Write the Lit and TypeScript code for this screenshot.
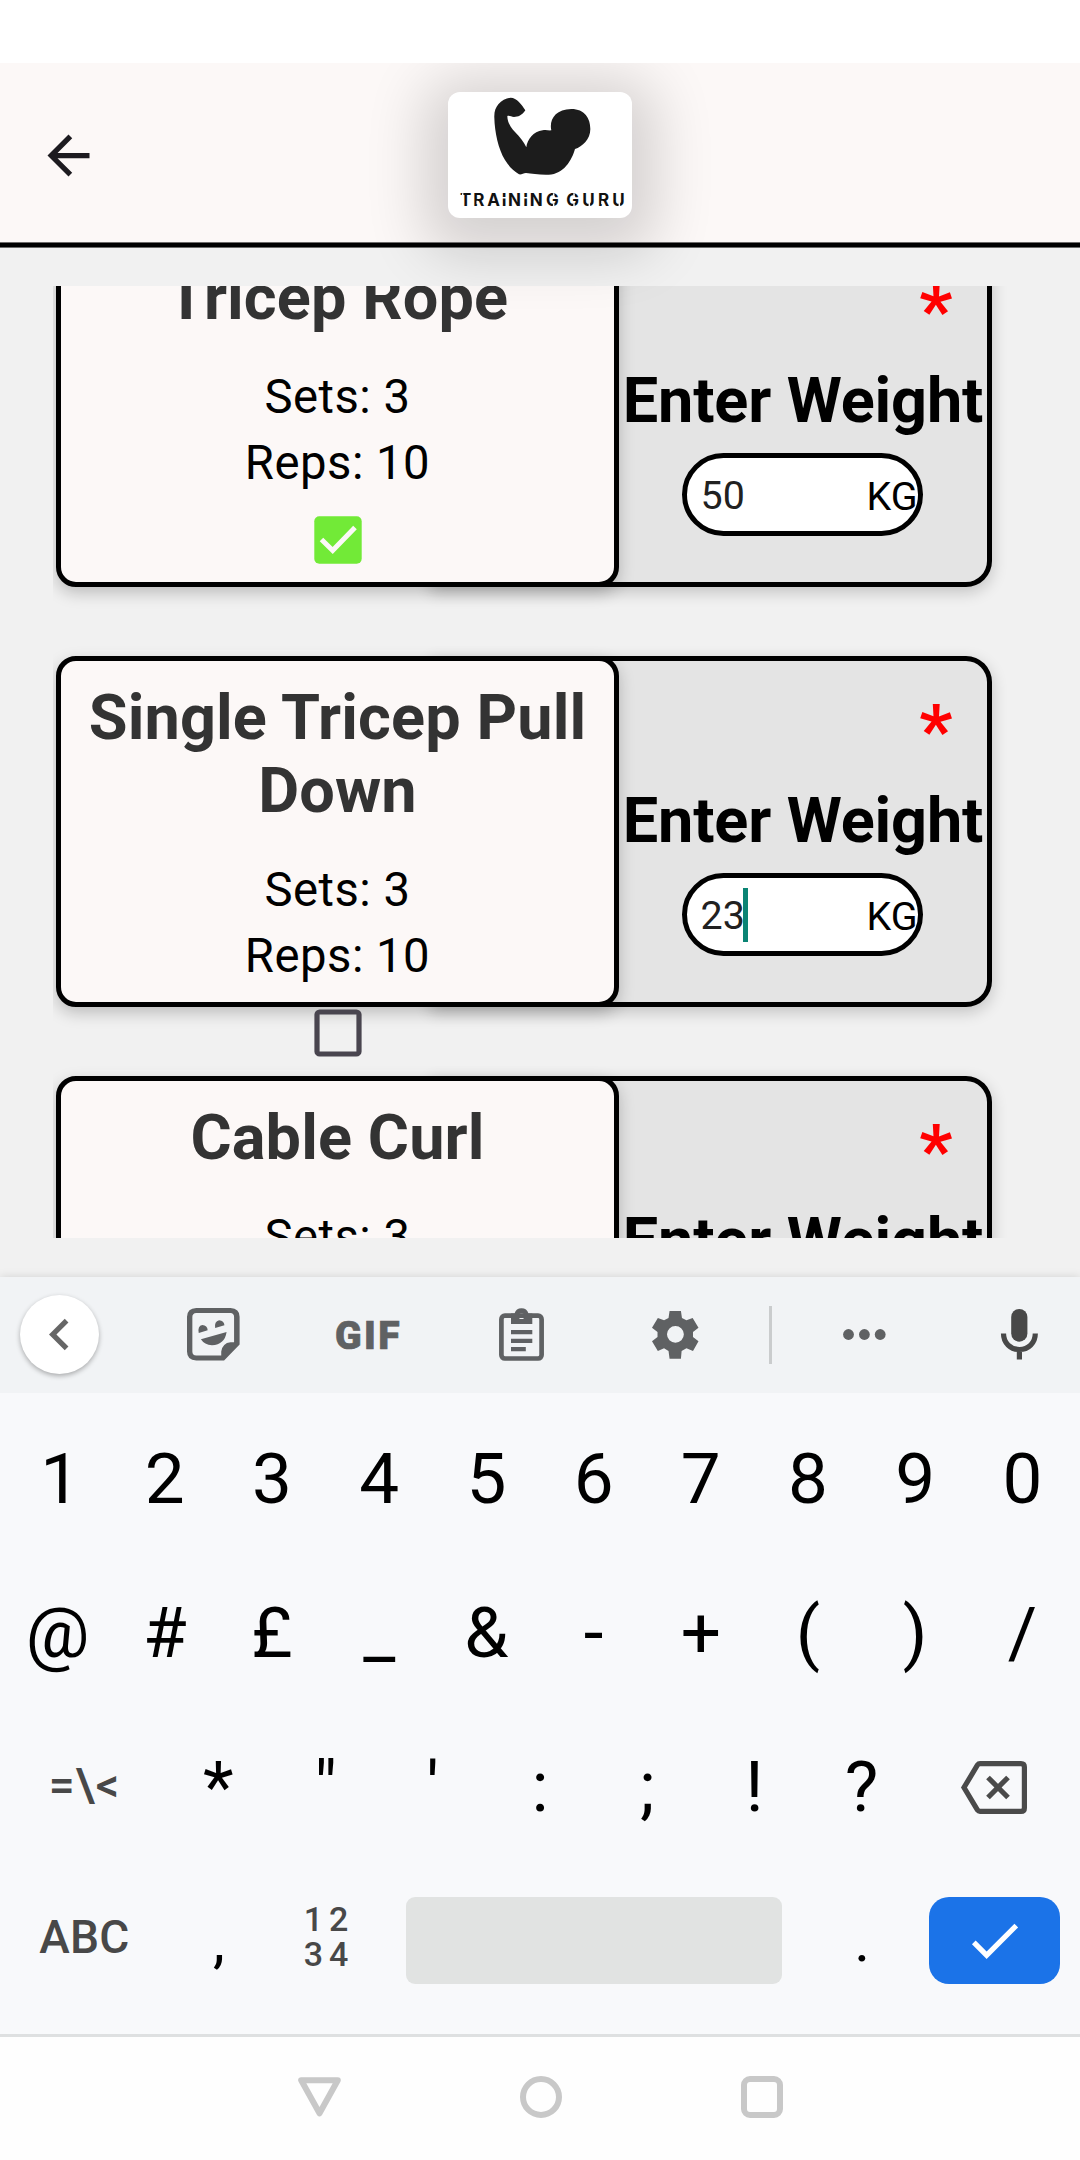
import { LitElement, html, css, svg, nothing } from "lit";
import { customElement, property } from "lit/decorators.js";

interface Exercise {
  name: string;
  sets: number;
  reps: number;
  done: boolean;
  weight: string;
  focused: boolean;
}

const EXERCISES: Exercise[] = [
  { name: "Tricep Rope", sets: 3, reps: 10, done: true, weight: "50", focused: false },
  { name: "Single Tricep Pull Down", sets: 3, reps: 10, done: false, weight: "23", focused: true },
  { name: "Cable Curl", sets: 3, reps: 10, done: false, weight: "", focused: false },
];

@customElement("app-header")
class AppHeader extends LitElement {
  static styles = css`
    :host {
      display: grid;
      grid-template-columns: 1fr 184px 1fr;
      align-items: center;
      box-sizing: border-box;
      height: 179px;
      background: #fcf8f7;
      position: relative;
      z-index: 2;
      clip-path: inset(0 0 -140px 0);
    }
    .back {
      display: block;
      width: 63px;
      height: 63px;
      margin: 6px 0 0 37px;
    }
    .logo {
      width: 184px;
      height: 126px;
      margin-top: 4px;
      border-radius: 12px;
      background: #fff;
      box-shadow: 0 12px 58px 24px rgba(0, 0, 0, 0.16);
    }
    .logo svg {
      display: block;
      width: 184px;
      height: 126px;
    }
    .brand {
      font: 700 51px "Inter", "Roboto", sans-serif;
      fill: #111;
    }
  `;
  render() {
    return html`
      <svg class="back" viewBox="0 0 24 24">
        <path fill="#1d1b20" d="M20 11H7.83l5.59-5.59L12 4l-8 8 8 8 1.41-1.41L7.83 13H20v-2z" />
      </svg>
      <div class="logo">
        <svg viewBox="264 126 552 378">
          <path
            fill="#1c1c1c"
            d="M496 181 C486 196 474 201 462 201 C454 201 449 196 442 198 C442 216 452 233 465 246 C480 261 491 275 499 292 C502 268 520 245 548 241 C558 239 566 242 574 241 C567 211 585 177 634 177 C674 177 691 205 691 237 C691 268 667 290 645 297 C636 330 611 373 566 374 C540 375 515 371 498 369 C490 369 484 375 477 373 C461 363 446 349 435 330 C415 297 404 246 403 203 C402 185 407 173 415 163 C425 151 439 144 452 143 C470 143 486 164 496 181 Z"
          />
          <text class="brand" x="300 340 382 425 444 490 509 558 600 619 667 714 757" y="469">TRAINING GURU</text>
          <path stroke="#fff" stroke-width="4.500" d="M425 443H441M490 443H506M308 430V440M352 452V462M581 430V441M581 460V471M642 430V441M642 460V471M688 458V471M778 458V471M726 452V462" />
        </svg>
      </div>
    `;
  }
}

@customElement("exercise-card")
class ExerciseCard extends LitElement {
  @property({ attribute: false }) item!: Exercise;
  static styles = css`
    :host {
      display: flex;
      height: 351px;
    }
    .panel {
      box-sizing: border-box;
      height: 351px;
      border: 5px solid #000;
      display: flex;
      flex-direction: column;
      flex: none;
    }
    .info {
      width: 563px;
      border-radius: 20px;
      background: #fcf8f7;
      align-items: center;
      padding-top: 20px;
      position: relative;
      z-index: 1;
      box-shadow: 0 6px 16px rgba(0, 0, 0, 0.22);
    }
    .weight {
      width: 562px;
      margin-left: -189px;
      padding-left: 184px;
      border-radius: 4px 26px 26px 4px;
      background: #e4e4e4;
      align-items: center;
      box-shadow: 0 5px 16px rgba(0, 0, 0, 0.2);
    }
    .name {
      width: 520px;
      text-align: center;
      font-size: 63px;
      line-height: 73px;
      letter-spacing: 0.12px;
      font-weight: 700;
      color: #333;
      margin-bottom: 31px;
    }
    .line {
      font-size: 47.25px;
      line-height: 65.5px;
      letter-spacing: 0.5px;
      flex: none;
    }
    .box {
      display: block;
      width: 48px;
      height: 48px;
      margin: 19.5px 0 0 0;
      flex: none;
    }
    .star {
      color: #f00;
      font-size: 73px;
      font-weight: 700;
      line-height: 74px;
      height: 74px;
      align-self: flex-end;
      margin: 33px 34.5px 0 0;
    }
    .label {
      font-size: 63px;
      font-weight: 700;
      line-height: 74px;
      letter-spacing: -0.14px;
      white-space: nowrap;
      margin-top: 16px;
    }
    .field {
      box-sizing: border-box;
      width: 241px;
      height: 83px;
      border: 5px solid #000;
      border-radius: 42px;
      background: #fff;
      display: flex;
      align-items: center;
      padding: 0 0 0 14px;
      font-size: 39.4px;
      line-height: 46px;
      margin: 15px 2px 0 0;
    }
    .value {
      color: #212121;
      padding-top: 3px;
    }
    .caret {
      width: 5px;
      height: 54px;
      margin-left: -2px;
      background: #0a8474;
    }
    .unit {
      margin-left: auto;
      padding-top: 5px;
    }
  `;
  render() {
    const e = this.item;
    return html`
      <div class="panel info">
        <div class="name">${e.name}</div>
        <div class="line">Sets: ${e.sets}</div>
        <div class="line">Reps: ${e.reps}</div>
        <svg class="box" viewBox="0 0 48 48">
          ${e.done
            ? svg`<rect x=".3" y=".3" width="47.4" height="47.4" rx="5" fill="#72ea37"/><path d="M7.5 23.5L18.7 34.5L41 11.5" fill="none" stroke="#fcf8f7" stroke-width="5"/>`
            : svg`<rect x="3" y="3" width="42" height="42" rx="2.6" fill="none" stroke="#49454f" stroke-width="5.2"/>`}
        </svg>
      </div>
      <div class="panel weight">
        <div class="star">*</div>
        <div class="label">Enter Weight</div>
        <div class="field">
          <span class="value">${e.weight}</span>
          ${e.focused ? html`<span class="caret"></span>` : nothing}
          <span class="unit">KG</span>
        </div>
      </div>
    `;
  }
}

const STICKER = svg`<svg class="ic" width="52.6" height="52.6" viewBox="524 144 147.5 158.5" preserveAspectRatio="none">
  <path fill="#5f6163" fill-rule="evenodd" d="M550 144H646Q671.500 146 671.500 170V254L628 302.500H550Q524 301 524 275V170Q525 145 550 144ZM550 159Q539 160 539 171V275Q539 287 550 287H620V275Q624 249 646 247H656V171Q656 160 646 159Z"/>
  <path fill="#5f6163" d="M557 219Q553 198 567 195Q581 196 582 211ZM603 204Q600 185 614 181Q628 183 629 196ZM563 238L635 216Q630 254 594 256Q573 255 563 238Z"/></svg>`;
const GIF = svg`<svg class="ic" width="64" height="53" viewBox="0 0 64 53"><text class="gif" x="-1" y="40.500" textLength="64.500" lengthAdjust="spacing">GIF</text></svg>`;
const CLIP = svg`<svg class="ic" width="45" height="53" viewBox="0 0 45 53">
  <rect x="2.4" y="7.700" width="40.200" height="42.800" rx="3.500" fill="none" stroke="#5f6163" stroke-width="4.700"/>
  <path fill="#5f6163" fill-rule="evenodd" d="M12 16V5.500H15.500A7.300 7.300 0 0 1 29.500 5.500H33.300V16ZM22.500 5.300a2.900 2.900 0 1 0 0 5.800a2.900 2.900 0 1 0 0-5.800Z"/>
  <path fill="#5f6163" d="M12 22h21.300v4.300H12zM12 30.700h21.300v4.300H12zM12 39h14.800v4.200H12z"/></svg>`;
const GEAR = svg`<svg class="ic" width="46.5" height="47.700" viewBox="326 153 135 143" preserveAspectRatio="none">
  <path fill="#5f6163" fill-rule="evenodd" d="M377 153H410L413 174L426 181L444 174L461 203L445 216V231L461 244L445 273L426 265L412 273L410 296H377L374 273L361 265L343 273L326 244L342 231V216L326 203L343 174L361 181L374 174ZM394 198a24.500 25 0 1 0 0 50a24.500 25 0 1 0 0-50Z"/></svg>`;
const DOTS = svg`<svg class="ic" width="43" height="11" viewBox="0 0 43 11"><g fill="#5f6163"><circle cx="5.500" cy="5.500" r="5.400"/><circle cx="21.400" cy="5.500" r="5.400"/><circle cx="37.200" cy="5.500" r="5.400"/></g></svg>`;
const MIC = svg`<svg class="ic" width="37" height="51" viewBox="0 0 37 51"><rect x="10.200" y="0" width="16.200" height="32.700" rx="8.100" fill="#484848"/><path d="M2.500 24.500C2.500 34 9.500 40.500 18.400 40.500S34.300 34 34.300 24.500M18.400 40V50.500" fill="none" stroke="#484848" stroke-width="5.200"/></svg>`;

@customElement("soft-keyboard")
class SoftKeyboard extends LitElement {
  static styles = css`
    :host {
      display: block;
      height: 757px;
      background: #f8f9fb;
      position: relative;
      z-index: 1;
      box-shadow: 0 0 9px rgba(0, 0, 0, 0.13);
      clip-path: inset(-20px 0 0 0);
    }
    .ic {
      display: block;
      flex: none;
      overflow: visible;
    }
    .bar {
      box-sizing: border-box;
      height: 116px;
      background: #f1f3f5;
      display: flex;
      align-items: center;
      padding: 0 42px 1px 20px;
    }
    .collapse {
      width: 79px;
      height: 79px;
      border-radius: 50%;
      background: #fff;
      box-shadow: 0 2px 5px rgba(0, 0, 0, 0.3);
      display: grid;
      place-items: center;
      margin-right: 88px;
    }
    .gif {
      font: 900 39px "Roboto", sans-serif;
      fill: #5f6163;
      stroke: #5f6163;
      stroke-width: 0.7px;
    }
    .g1 {
      margin-left: 96px;
    }
    .g2 {
      margin-left: 99px;
    }
    .g3 {
      margin-left: 108px;
    }
    .rule {
      width: 3px;
      height: 58px;
      background: #cacccd;
      margin: 0 71px;
    }
    .mic {
      margin-left: auto;
    }
    .keys {
      padding: 9px 4px 0 4px;
    }
    .row {
      display: grid;
      grid-template-columns: repeat(20, 1fr);
      height: 154.2px;
      align-items: center;
      justify-items: center;
    }
    .key {
      grid-column: span 2;
      font-size: 71px;
      line-height: 84px;
      color: #000;
    }
    .row:first-child .key:first-child {
      padding-left: 5px;
    }
    .wide {
      grid-column: span 3;
    }
    .bs {
      padding: 0 3px 0 0;
    }
    .small {
      font-size: 60px;
      padding: 0 0 2px 1px;
    }
    .fn {
      color: #484848;
      font-size: 46px;
      font-weight: 500;
      line-height: 54px;
      padding-bottom: 10px;
    }
    .abc {
      letter-spacing: 0.2px;
    }
    .sym {
      font-size: 46px;
      padding-bottom: 4px;
      letter-spacing: 0.9px;
    }
    .pad {
      color: #484848;
      font-size: 34px;
      font-weight: 500;
      line-height: 35px;
      letter-spacing: 6px;
      padding: 0 0 10px 7px;
      text-align: center;
    }
    .space {
      grid-column: span 8;
      width: 376px;
      height: 87px;
      border-radius: 9px;
      background: #e1e3e2;
      margin-bottom: 2px;
    }
    .enter {
      width: 131px;
      height: 87px;
      border-radius: 20px;
      background: #1b73e8;
      display: grid;
      place-items: center;
      margin: 0 2px 2px 0;
    }
  `;
  private keys(chars: string) {
    return [...chars].map((c) => html`<div class="key">${c}</div>`);
  }
  render() {
    return html`
      <div class="bar">
        <div class="collapse">
          <svg class="ic" width="63" height="63" viewBox="0 0 24 24">
            <path fill="#666" d="M15.410 7.410L14 6l-6 6 6 6 1.410-1.410L10.830 12z" />
          </svg>
        </div>
        ${STICKER}
        <div class="g1">${GIF}</div>
        <div class="g2">${CLIP}</div>
        <div class="g3">${GEAR}</div>
        <div class="rule"></div>
        ${DOTS}
        <div class="mic">${MIC}</div>
      </div>
      <div class="keys">
        <div class="row">${this.keys("1234567890")}</div>
        <div class="row">${this.keys("@#£_&-+()/")}</div>
        <div class="row">
          <div class="wide fn sym">=\\&lt;</div>
          ${this.keys("*\"':;!?")}
          <div class="wide bs">
            <svg class="ic" width="66" height="53" viewBox="0 0 66 53">
              <g fill="none" stroke="#4a4a4a">
                <path d="M19 2.600H60Q63.400 2.600 63.400 6V47Q63.400 50.400 60 50.400H19Q17.500 50.400 16.500 49L3 26.500L16.500 4Q17.500 2.600 19 2.600Z" stroke-width="5.200" />
                <path d="M27 16.500L47 36.500M47 16.500L27 36.500" stroke-width="5.200" />
              </g>
            </svg>
          </div>
        </div>
        <div class="row">
          <div class="wide fn abc">ABC</div>
          <div class="key small">,</div>
          <div class="key pad">12<br />34</div>
          <div class="space"></div>
          <div class="key small">.</div>
          <div class="wide enter">
            <svg class="ic" width="63" height="63" viewBox="0 0 24 24">
              <path fill="#fff" d="M9 16.170L4.830 12l-1.420 1.410L9 19 21 7l-1.410-1.410z" />
            </svg>
          </div>
        </div>
      </div>
    `;
  }
}

@customElement("app-root")
class AppRoot extends LitElement {
  static styles = css`
    :host {
      display: flex;
      flex-direction: column;
      box-sizing: border-box;
      width: 1080px;
      height: 2160px;
      padding-top: 63px;
      overflow: hidden;
      background: #fff;
      color: #000;
      font-family: "Roboto", "Liberation Sans", sans-serif;
    }
    .edge {
      box-sizing: border-box;
      height: 6px;
      background: #000;
      border-top: 1px solid #6e6c6c;
      border-bottom: 1px solid #6b6b6b;
      position: relative;
      z-index: 3;
    }
    .page {
      box-sizing: border-box;
      height: 1029px;
      background: #f1f1f1;
      padding: 38px 53px 39px;
    }
    .viewport {
      height: 952px;
      overflow: hidden;
    }
    .list {
      display: flex;
      flex-direction: column;
      gap: 69px;
      margin: -50px 0 0 3px;
    }
    .nav {
      flex: 1;
      box-sizing: border-box;
      border-top: 3px solid #dee0e1;
      background: #fefefe;
      display: flex;
      gap: 179px;
      padding: 39px 0 0 298px;
    }
  `;
  render() {
    return html`
      <app-header></app-header>
      <div class="edge"></div>
      <div class="page">
        <div class="viewport">
          <div class="list">${EXERCISES.map((e) => html`<exercise-card .item=${e}></exercise-card>`)}</div>
        </div>
      </div>
      <soft-keyboard></soft-keyboard>
      <div class="nav">
        <svg width="43" height="42" viewBox="0 0 43 42" fill="none" stroke="#c8c8c8" stroke-width="6" stroke-linejoin="round">
          <path d="M3.200 4.200H39.800L21.500 37.300Z" />
        </svg>
        <svg width="42" height="42" viewBox="1 0 42 42" fill="none" stroke="#c8c8c8" stroke-width="6" overflow="visible">
          <circle cx="22" cy="21" r="18" />
        </svg>
        <svg width="42" height="42" viewBox="0 0 42 42" fill="none" stroke="#c8c8c8" stroke-width="6">
          <rect x="3" y="3" width="36" height="36" rx="6" />
        </svg>
      </div>
    `;
  }
}
